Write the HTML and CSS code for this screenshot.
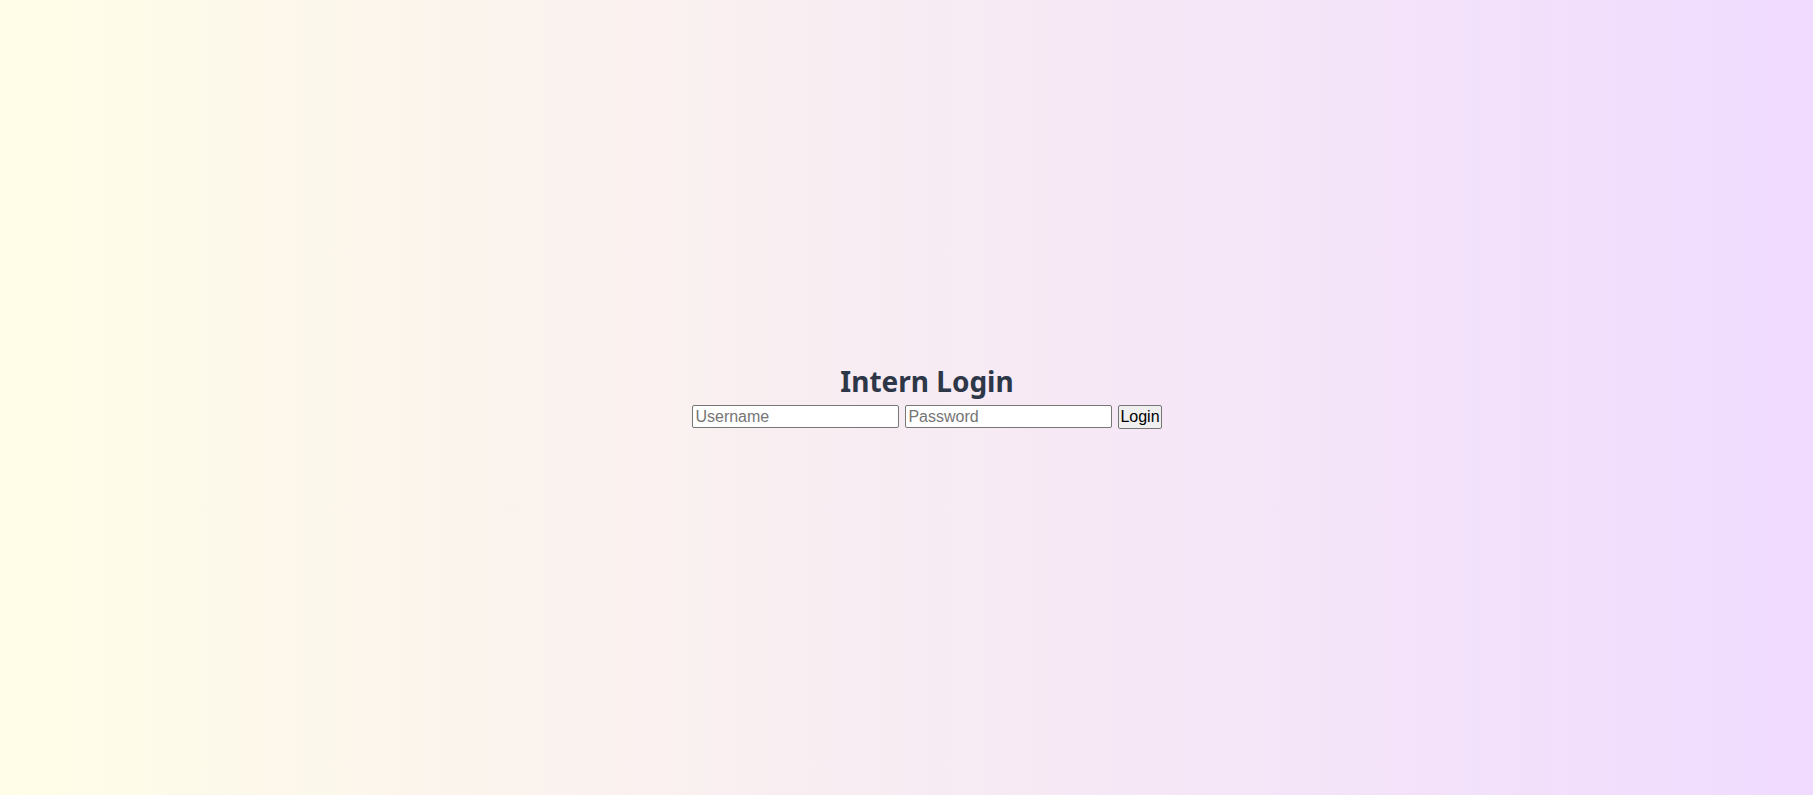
FILE: index.html
```html
<!DOCTYPE html>
<html>
<head>
<meta charset="utf-8">
<title>Intern Login</title>
<link rel="stylesheet" href="styles.css">
</head>
<body>
<main class="page">
  <div class="login">
    <h1 class="title">Intern Login</h1>
    <form class="form">
      <input class="field" type="text" placeholder="Username">
      <input class="field" type="password" placeholder="Password">
      <button class="btn" type="button">Login</button>
    </form>
  </div>
</main>
</body>
</html>
```
FILE: styles.css
```css
html, body {
  margin: 0;
  padding: 0;
  height: 100%;
}
body {
  background: linear-gradient(to right, #fffde7, #f0dbff);
  font-family: "Noto Sans", sans-serif;
}
.page {
  height: 100%;
  display: flex;
  align-items: center;
  justify-content: center;
  padding-left: 41px;
  padding-bottom: 2px;
  box-sizing: border-box;
}
.login {
  display: flex;
  flex-direction: column;
  align-items: center;
  gap: 8px;
}
.title {
  margin: 0;
  font-size: 28px;
  font-weight: 700;
  line-height: 32px;
  color: #2d3748;
}
.form {
  display: flex;
  align-items: center;
  gap: 6px;
}
.field {
  box-sizing: border-box;
  width: 207px;
  height: 23px;
  margin: 0;
  padding: 1px 2px;
  border: 1px solid #767676;
  border-radius: 2px;
  background: #fff;
  font-family: "Liberation Sans", Arial, sans-serif;
  font-size: 16px;
}
.field::placeholder {
  color: #757575;
}
.btn {
  box-sizing: border-box;
  height: 24px;
  margin: 0;
  padding: 0 1px;
  border: 1px solid #767676;
  border-radius: 2px;
  background: #efefef;
  color: #000;
  font-family: "Liberation Sans", Arial, sans-serif;
  font-size: 16px;
}
```
